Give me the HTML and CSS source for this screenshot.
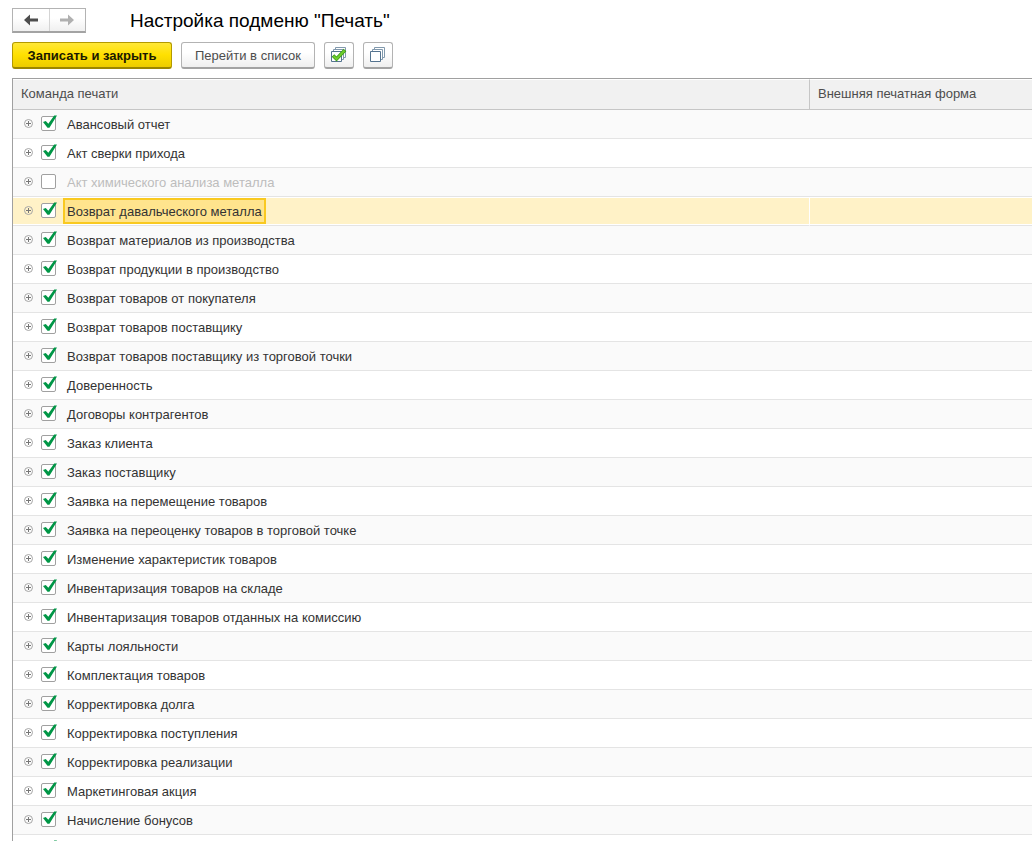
FILE: index.html
```html
<!DOCTYPE html>
<html lang="ru">
<head>
<meta charset="utf-8">
<title>Настройка подменю "Печать"</title>
<link rel="stylesheet" href="styles.css">
</head>
<body>
<header class="titlebar">
  <nav class="history">
    <button class="history-btn" type="button"><svg width="16" height="12" viewBox="0 0 16 12"><path d="M1 6 7 .5V4.500h8v3H7v4z" fill="#4d4d4d"/></svg></button>
    <button class="history-btn" type="button"><svg width="16" height="12" viewBox="0 0 16 12"><path d="M15 6 9 .5V4.500H1v3h8v4z" fill="#b0b0b0"/></svg></button>
  </nav>
  <h1 class="title">Настройка подменю "Печать"</h1>
</header>
<div class="toolbar">
  <button class="btn primary" type="button">Записать и закрыть</button>
  <button class="btn" type="button">Перейти в список</button>
  <button class="btn icon" type="button"><svg width="16" height="16" viewBox="0 0 16 16"><g fill="#fff" stroke="#54738f"><path d="M4.500.5h10v10h-10z" stroke="#8199ad"/><path d="M2.500 2.500h10v10h-10z" stroke="#8199ad"/><path d="M.5 4.500h10v10H.5z"/></g><path d="M2 8.500 5.500 12 14 3" fill="none" stroke="#3c9a18" stroke-width="3.600"/><path d="M2.500 9 5.500 12 13.500 3.500" fill="none" stroke="#6fce2c" stroke-width="2"/></svg></button>
  <button class="btn icon" type="button"><svg width="16" height="16" viewBox="0 0 16 16"><g fill="#fff" stroke="#54738f"><path d="M4.500.5h10v10h-10z" stroke="#8199ad"/><path d="M2.500 2.500h10v10h-10z" stroke="#8199ad"/><path d="M.5 4.500h10v10H.5z"/></g></svg></button>
</div>
<main class="list">
<table class="grid">
<colgroup><col><col class="col-form"></colgroup>
<thead><tr><th>Команда печати</th><th>Внешняя печатная форма</th></tr></thead>
<tbody>
<tr><td><div class="cell"><button class="expand" type="button"></button><input class="check" type="checkbox" id="c1" checked><label class="name" for="c1">Авансовый отчет</label></div></td><td></td></tr>
<tr><td><div class="cell"><button class="expand" type="button"></button><input class="check" type="checkbox" id="c2" checked><label class="name" for="c2">Акт сверки прихода</label></div></td><td></td></tr>
<tr class="off"><td><div class="cell"><button class="expand" type="button"></button><input class="check" type="checkbox" id="c3"><label class="name" for="c3">Акт химического анализа металла</label></div></td><td></td></tr>
<tr class="selected"><td><div class="cell"><button class="expand" type="button"></button><input class="check" type="checkbox" id="c4" checked><label class="name" for="c4">Возврат давальческого металла</label></div></td><td></td></tr>
<tr><td><div class="cell"><button class="expand" type="button"></button><input class="check" type="checkbox" id="c5" checked><label class="name" for="c5">Возврат материалов из производства</label></div></td><td></td></tr>
<tr><td><div class="cell"><button class="expand" type="button"></button><input class="check" type="checkbox" id="c6" checked><label class="name" for="c6">Возврат продукции в производство</label></div></td><td></td></tr>
<tr><td><div class="cell"><button class="expand" type="button"></button><input class="check" type="checkbox" id="c7" checked><label class="name" for="c7">Возврат товаров от покупателя</label></div></td><td></td></tr>
<tr><td><div class="cell"><button class="expand" type="button"></button><input class="check" type="checkbox" id="c8" checked><label class="name" for="c8">Возврат товаров поставщику</label></div></td><td></td></tr>
<tr><td><div class="cell"><button class="expand" type="button"></button><input class="check" type="checkbox" id="c9" checked><label class="name" for="c9">Возврат товаров поставщику из торговой точки</label></div></td><td></td></tr>
<tr><td><div class="cell"><button class="expand" type="button"></button><input class="check" type="checkbox" id="c10" checked><label class="name" for="c10">Доверенность</label></div></td><td></td></tr>
<tr><td><div class="cell"><button class="expand" type="button"></button><input class="check" type="checkbox" id="c11" checked><label class="name" for="c11">Договоры контрагентов</label></div></td><td></td></tr>
<tr><td><div class="cell"><button class="expand" type="button"></button><input class="check" type="checkbox" id="c12" checked><label class="name" for="c12">Заказ клиента</label></div></td><td></td></tr>
<tr><td><div class="cell"><button class="expand" type="button"></button><input class="check" type="checkbox" id="c13" checked><label class="name" for="c13">Заказ поставщику</label></div></td><td></td></tr>
<tr><td><div class="cell"><button class="expand" type="button"></button><input class="check" type="checkbox" id="c14" checked><label class="name" for="c14">Заявка на перемещение товаров</label></div></td><td></td></tr>
<tr><td><div class="cell"><button class="expand" type="button"></button><input class="check" type="checkbox" id="c15" checked><label class="name" for="c15">Заявка на переоценку товаров в торговой точке</label></div></td><td></td></tr>
<tr><td><div class="cell"><button class="expand" type="button"></button><input class="check" type="checkbox" id="c16" checked><label class="name" for="c16">Изменение характеристик товаров</label></div></td><td></td></tr>
<tr><td><div class="cell"><button class="expand" type="button"></button><input class="check" type="checkbox" id="c17" checked><label class="name" for="c17">Инвентаризация товаров на складе</label></div></td><td></td></tr>
<tr><td><div class="cell"><button class="expand" type="button"></button><input class="check" type="checkbox" id="c18" checked><label class="name" for="c18">Инвентаризация товаров отданных на комиссию</label></div></td><td></td></tr>
<tr><td><div class="cell"><button class="expand" type="button"></button><input class="check" type="checkbox" id="c19" checked><label class="name" for="c19">Карты лояльности</label></div></td><td></td></tr>
<tr><td><div class="cell"><button class="expand" type="button"></button><input class="check" type="checkbox" id="c20" checked><label class="name" for="c20">Комплектация товаров</label></div></td><td></td></tr>
<tr><td><div class="cell"><button class="expand" type="button"></button><input class="check" type="checkbox" id="c21" checked><label class="name" for="c21">Корректировка долга</label></div></td><td></td></tr>
<tr><td><div class="cell"><button class="expand" type="button"></button><input class="check" type="checkbox" id="c22" checked><label class="name" for="c22">Корректировка поступления</label></div></td><td></td></tr>
<tr><td><div class="cell"><button class="expand" type="button"></button><input class="check" type="checkbox" id="c23" checked><label class="name" for="c23">Корректировка реализации</label></div></td><td></td></tr>
<tr><td><div class="cell"><button class="expand" type="button"></button><input class="check" type="checkbox" id="c24" checked><label class="name" for="c24">Маркетинговая акция</label></div></td><td></td></tr>
<tr><td><div class="cell"><button class="expand" type="button"></button><input class="check" type="checkbox" id="c25" checked><label class="name" for="c25">Начисление бонусов</label></div></td><td></td></tr>
<tr><td><div class="cell"><button class="expand" type="button"></button><input class="check" type="checkbox" id="c26" checked><label class="name" for="c26"></label></div></td><td></td></tr>
</tbody>
</table>
</main>
</body>
</html>
```
FILE: styles.css
```css
* { box-sizing: border-box; }
body {
  margin: 0;
  padding: 8px 0 0 12px;
  height: 100vh;
  overflow: hidden;
  display: flex;
  flex-direction: column;
  background: #fff;
  color: #333;
  font: 13px/16px "Liberation Sans", Arial, sans-serif;
}
button { font: inherit; color: inherit; padding: 0; }
svg { display: block; }

.titlebar { display: flex; align-items: center; gap: 44px; flex: none; }
.history {
  display: flex;
  width: 74px;
  height: 25px;
  border: 1px solid #b3b3b3;
  border-bottom: 2px solid #a3a3a3;
  background: linear-gradient(#fff 40%, #f0f0f0);
}
.history-btn {
  flex: 1;
  display: grid;
  place-items: center;
  border: 0;
  background: none;
}
.history-btn + .history-btn { border-left: 1px solid #d4d4d4; }
.title { margin: 0; font-size: 19px; line-height: 24px; font-weight: 400; color: #000; }

.toolbar { display: flex; gap: 9px; margin-top: 9px; flex: none; }
.btn {
  height: 27px;
  padding: 1px 13px 0;
  border: 1px solid #b3b3b3;
  border-bottom: 2px solid #a3a3a3;
  border-radius: 3px;
  background: linear-gradient(#fff 40%, #efefef);
  color: #4d4d4d;
}
.primary {
  min-width: 160px;
  border-color: #b39a00;
  border-bottom: 2px solid #9c8600;
  background: linear-gradient(#ffe838, #ffe000 50%, #edcc00);
  color: #1a1a00;
  font-weight: 700;
}
.icon { display: grid; place-items: center; width: 30px; padding: 0; }

.list {
  flex: 1;
  min-height: 0;
  overflow: hidden;
  margin-top: 9px;
  border: solid #a0a0a0;
  border-width: 1px 0 0 1px;
}
.grid { width: 100%; table-layout: fixed; border-collapse: separate; border-spacing: 0; }
.col-form { width: 223px; }
.grid th {
  height: 31px;
  padding: 0 8px 2px;
  border: solid #fff;
  border-width: 1px 0;
  border-bottom-color: #c6c6c6;
  background: #f1f1f1;
  color: #4d4d4d;
  font-weight: 400;
  text-align: left;
}
.grid th + th { border-left: 1px solid #c6c6c6; }
.grid td { height: 29px; padding: 0; border-bottom: 1px solid #e4e4e4; }
.grid tbody tr:nth-child(odd) { background: #fafafa; }

.cell { display: flex; align-items: flex-start; height: 28px; padding-left: 11px; }
.expand {
  width: 9px;
  height: 9px;
  margin-top: 9px;
  border: 1px solid #a6a6a6;
  border-radius: 50%;
  background:
    linear-gradient(#777, #777) center / 5px 1px no-repeat,
    linear-gradient(#777, #777) center / 1px 5px no-repeat;
}
.check {
  appearance: none;
  position: relative;
  width: 15px;
  height: 15px;
  margin: 6px 7px 0 8px;
  border: 1px solid #a0a0a0;
  border-radius: 2px;
  background: #fff;
}
.check:checked::after {
  content: "";
  position: absolute;
  left: 1px;
  top: -2px;
  width: 14px;
  height: 13px;
  background: #009646;
  clip-path: polygon(0 54%, 20% 46%, 38% 68%, 80% 4%, 100% 4%, 46% 98%, 32% 98%);
}
.name { padding: 2px 4px 0; line-height: 26px; }
.off .name { color: #bdbdbd; }
.selected td {
  background: #fff2c7;
  box-shadow: inset 0 1px #fff, inset 0 -1px #fff;
}
.selected td + td { border-left: 1px solid #fff; }
.selected .name {
  margin-top: 1px;
  padding: 2px 2px 0;
  border: 2px solid #f9c920;
  background: #ffe48d;
  line-height: 20px;
}
```
